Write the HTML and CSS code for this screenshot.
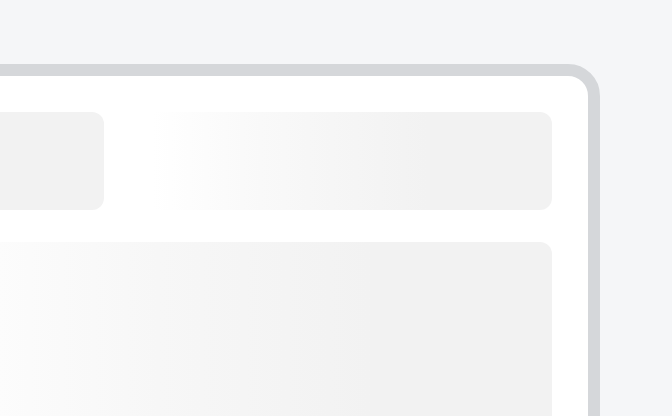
FILE: index.html
```html
<!DOCTYPE html>
<html lang="en">
<head>
<meta charset="utf-8">
<title>Loading</title>
<link rel="stylesheet" href="styles.css">
</head>
<body>
<main class="stage">
  <section class="card" aria-busy="true" aria-label="Loading content">
    <div class="row">
      <div class="skel skel-solid"></div>
      <div class="skel skel-shimmer"></div>
    </div>
    <div class="skel skel-big"></div>
  </section>
</main>
</body>
</html>
```

FILE: styles.css
```css
html, body {
  margin: 0;
  padding: 0;
  height: 100%;
  overflow: hidden;
  background: #f5f6f8;
}

.stage {
  display: flex;
  justify-content: flex-end;
  align-items: flex-start;
  padding: 64px 72px 0 0;
  height: 100%;
  box-sizing: border-box;
}

.card {
  flex: 0 0 700px;
  width: 700px;
  height: 520px;
  box-sizing: border-box;
  background: #ffffff;
  border: 12px solid #d5d7da;
  border-radius: 32px;
  padding: 36px;
  display: flex;
  flex-direction: column;
  gap: 32px;
}

.row {
  display: grid;
  grid-template-columns: 1fr 416px;
  gap: 32px;
}

.skel {
  border-radius: 12px;
  background: #f2f2f2;
}

.row .skel {
  height: 98px;
}

.skel-shimmer {
  background: linear-gradient(90deg, #ffffff 4%, #f9f9f9 30%, #f2f2f2 70%);
}

.skel-big {
  height: 240px;
  background: linear-gradient(90deg, #fcfcfc 8%, #f7f7f7 35%, #f2f2f2 70%);
}
```
